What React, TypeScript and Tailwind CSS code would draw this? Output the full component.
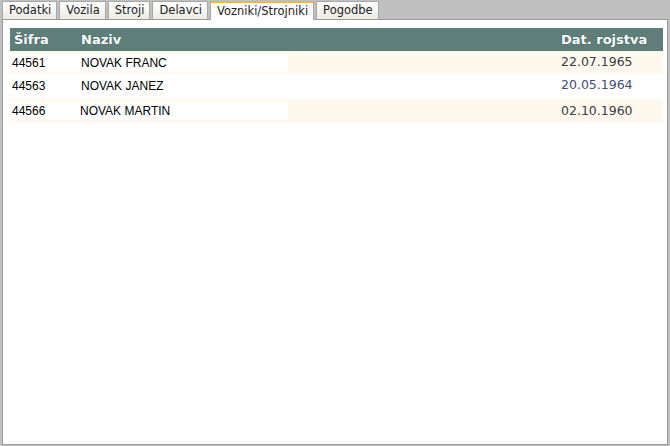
import React from "react";

const tabs = ["Podatki", "Vozila", "Stroji", "Delavci", "Vozniki/Strojniki", "Pogodbe"];

const rows = [
  { code: "44561", name: "NOVAK FRANC", date: "22.07.1965", tone: "cream", dateColor: "text-[#3a3a4a]" },
  { code: "44563", name: "NOVAK JANEZ", date: "20.05.1964", tone: "white", dateColor: "text-[#3d4c7c]" },
  { code: "44566", name: "NOVAK MARTIN", date: "02.10.1960", tone: "cream", dateColor: "text-[#3a3a4a]" },
];

export default function App() {
  return (
    <div className="flex h-[446px] w-[670px] flex-col bg-[#c0c0c0] font-['DejaVu_Sans',sans-serif]">
      <div className="flex h-[19px] items-end gap-[2px] pl-[2px]">
        {tabs.map((t) => {
          const active = t === "Vozniki/Strojniki";
          return (
            <div
              key={t}
              className={
                active
                  ? "relative -mb-px flex h-[19px] items-center border-x border-t-2 border-x-[#a8a8a8] border-t-[#e8b94a] bg-white pl-[6px] pr-[5px] text-[11.5px] text-[#222]"
                  : "flex h-[18px] items-center border border-b-0 border-[#a8a8a8] bg-gradient-to-b from-white to-[#ecebe4] pl-[6px] pr-[5px] text-[11.5px] text-[#222]"
              }
            >
              {t}
            </div>
          );
        })}
      </div>
      <div className="mx-[2px] mb-[1px] flex-1 border border-[#9a9a9a] bg-white pl-[7px] pr-[4px] pt-[8px]">
        <div className="flex h-[23px] items-center bg-[#5f7e7a] text-[13px] font-bold text-white [text-shadow:0_0_1px_#2a4a4a]">
          <div className="w-[68px] pl-[4px]">Šifra</div>
          <div className="flex-1 pl-[3px]">Naziv</div>
          <div className="w-[108px] pl-[6px]">Dat. rojstva</div>
        </div>
        {rows.map((r, i) => (
          <div
            key={r.code}
            className={`flex items-center ${r.tone === "cream" ? "bg-[#fff8ec]" : "bg-white"} ${i === 2 ? "h-[24px] mt-[2px]" : "h-[23px]"}`}
          >
            <div className="flex h-[18px] w-[278px] items-center bg-white font-['Liberation_Sans',sans-serif] text-[12px] text-black">
              <div className="w-[68px] pl-[2px]">{r.code}</div>
              <div className={i === 2 ? "pl-[2px]" : "pl-[3px]"}>{r.name}</div>
            </div>
            <div className="flex-1" />
            <div className={`w-[108px] pl-[6px] text-[12.5px] ${r.dateColor}`}>{r.date}</div>
          </div>
        ))}
      </div>
    </div>
  );
}
